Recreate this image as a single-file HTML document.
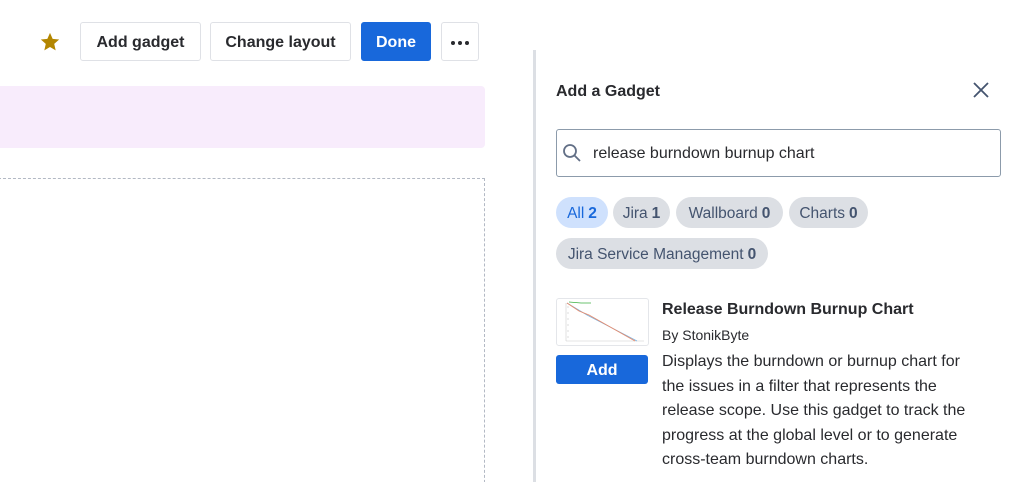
<!DOCTYPE html>
<html><head><meta charset="utf-8"><style>
*{box-sizing:border-box;margin:0;padding:0}
html,body{width:1023px;height:482px;overflow:hidden}
body{background:#fff;font-family:"Liberation Sans",sans-serif;color:#292a2e;position:relative}
.a{position:absolute}
.btn{position:absolute;top:22px;height:39px;border:1px solid #dfe1e6;border-radius:3px;background:#fff;font-size:16px;font-weight:600;color:#292a2e;display:flex;align-items:center;justify-content:center;padding-top:2px}
.pill{position:absolute;height:31px;border-radius:16px;background:#dcdfe4;font-size:15.5px;color:#44546f;display:flex;align-items:center;justify-content:center;padding-top:2px}
.pill b{color:#44546f;margin-left:4px}
.desc{font-size:16px;line-height:24.5px;color:#292a2e}
</style></head><body>
<svg class="a" style="left:39px;top:31px" width="22" height="22" viewBox="0 0 24 24"><path d="M12 2l2.9 6.6 7.1.7-5.4 4.8 1.6 7L12 17.4 5.8 21.1l1.6-7L2 9.3l7.1-.7z" fill="#b38600"/></svg>
<div class="btn" style="left:80px;width:121px">Add gadget</div>
<div class="btn" style="left:210px;width:141px">Change layout</div>
<div class="btn" style="left:361px;width:70px;background:#1868db;border-color:#1868db;color:#fff">Done</div>
<div class="btn" style="left:441px;width:38px"><svg width="20" height="6"><circle cx="3" cy="3" r="2" fill="#292a2e"/><circle cx="10" cy="3" r="2" fill="#292a2e"/><circle cx="17" cy="3" r="2" fill="#292a2e"/></svg></div>
<div class="a" style="left:0;top:86px;width:485px;height:62px;background:#f8ecfc;border-radius:0 4px 4px 0"></div>
<div class="a" style="left:-2px;top:178px;width:487px;height:320px;border:1px dashed #b3b9c4"></div>
<div class="a" style="left:533px;top:50px;width:3px;height:440px;background:#dcdfe4"></div>
<div class="a" style="left:556px;top:83px;font-size:16px;font-weight:700;color:#292a2e">Add a Gadget</div>
<svg class="a" style="left:972px;top:81px" width="18" height="18" viewBox="0 0 18 18"><path d="M2 2L16 16M16 2L2 16" stroke="#44546f" stroke-width="1.8"/></svg>
<div class="a" style="left:556px;top:129px;width:445px;height:48px;border:1px solid #8c9bab;border-radius:3px"></div>
<svg class="a" style="left:562px;top:143px" width="20" height="20" viewBox="0 0 20 20"><circle cx="8" cy="8" r="6" stroke="#626f86" stroke-width="1.8" fill="none"/><path d="M12.5 12.5L18 18" stroke="#626f86" stroke-width="1.8"/></svg>
<div class="a" style="left:593px;top:145px;font-size:16px;color:#292a2e">release burndown burnup chart</div>
<div class="pill" style="left:556px;top:197px;width:52px;background:#cfe1fd;color:#1868db">All<b style="color:#1868db">2</b></div>
<div class="pill" style="left:613px;top:197px;width:57px">Jira<b>1</b></div>
<div class="pill" style="left:676px;top:197px;width:107px">Wallboard<b>0</b></div>
<div class="pill" style="left:789px;top:197px;width:79px">Charts<b>0</b></div>
<div class="pill" style="left:556px;top:238px;width:212px">Jira Service Management<b>0</b></div>
<div class="a" style="left:556px;top:298px;width:93px;height:48px;border:1px solid #e4e6ea;border-radius:3px;overflow:hidden">
<svg width="93" height="48" viewBox="0 0 93 48"><path d="M9 4v38M9 42h78" stroke="#ccc" stroke-width="0.6"/><path d="M10 8h2M10 14h2M10 20h2M10 26h2M10 32h2M10 38h2" stroke="#bbb" stroke-width="0.5"/><path d="M12 3l12 1 10 0" stroke="#3cb043" fill="none" stroke-width="0.8"/><path d="M10 4l20 12 50 26" stroke="#7bb3e0" fill="none" stroke-width="0.8"/><path d="M10 4l12 8 10 4 46 26" stroke="#e88a6a" fill="none" stroke-width="0.8"/></svg></div>
<div class="a" style="left:556px;top:355px;width:92px;height:29px;background:#1868db;border-radius:3px;color:#fff;font-weight:700;font-size:16px;display:flex;align-items:center;justify-content:center;padding-top:2px">Add</div>
<div class="a" style="left:662px;top:301px;font-size:16px;font-weight:700">Release Burndown Burnup Chart</div>
<div class="a" style="left:662px;top:327px;font-size:14px;color:#292a2e">By StonikByte</div>
<div class="a desc" style="left:662px;top:350px;width:330px">Displays the burndown or burnup chart for<br>the issues in a filter that represents the<br>release scope. Use this gadget to track the<br>progress at the global level or to generate<br>cross-team burndown charts.</div>
</body></html>
